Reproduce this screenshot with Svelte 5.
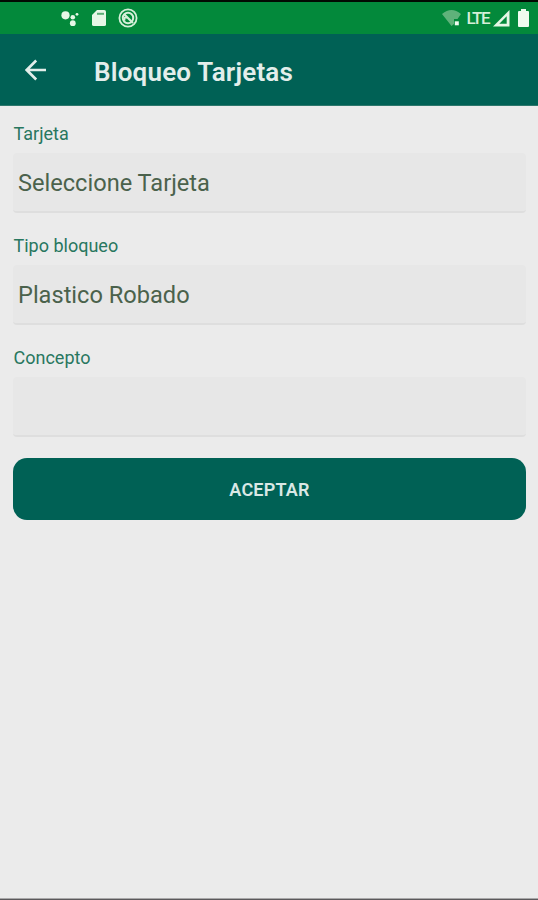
<script lang="ts">
	let tarjeta = $state('Seleccione Tarjeta');
	let tipoBloqueo = $state('Plastico Robado');
	let concepto = $state('');
</script>

<div class="screen">
	<div class="status-bar">
		<div class="notifications">
			<svg width="18" height="18" viewBox="0 0 18 18" fill="#e6f7e6">
				<circle cx="4.5" cy="6.3" r="4.1" />
				<circle cx="11.8" cy="8.3" r="2.3" />
				<circle cx="11.8" cy="14.2" r="2.9" />
				<circle cx="16" cy="5.3" r="1.4" />
			</svg>
			<svg class="sd" width="14" height="18" viewBox="0 0 14 18">
				<path d="M5 1h7.2Q14 1 14 2.6v12.8Q14 17 12.2 17H1.8Q0 17 0 15.4V6z" fill="#e6f7e6" />
				<path d="M5 4.8h7" stroke="#5aad76" stroke-width="2" />
			</svg>
			<svg class="sync" width="20" height="20" viewBox="0 0 20 20" fill="none" stroke="#d5efd8">
				<circle cx="10" cy="10" r="8.6" stroke-width="1.8" />
				<circle cx="10" cy="10" r="5.2" stroke-width="2" />
				<path d="M6 6l9 9" stroke-width="2.2" />
				<path d="M6.5 12.5V9.7h3" stroke-width="1.8" />
			</svg>
		</div>
		<div class="signals">
			<svg width="20" height="18" viewBox="0 0 20 18">
				<path d="M0 5Q9.5-3 19 5L15.5 10H12v5l-2.5 2z" fill="#5fb27a" />
				<path d="M12.8 12.3h4v4h-4z" fill="#f0fbf0" />
			</svg>
			<span class="network">LTE</span>
			<svg class="cell" width="17" height="17" viewBox="0 0 17 17">
				<path d="M16.5 0v16.5H0zM13.7 6.2L6.3 13.8h7.4z" fill="#e6f7e6" fill-rule="evenodd" />
			</svg>
			<svg class="battery" width="11" height="18" viewBox="0 0 11 18">
				<path d="M3 0h5v2h2q1 0 1 1v14q0 1-1 1H1q-1 0-1-1V3q0-1 1-1h2z" fill="#f0fbf0" />
			</svg>
		</div>
	</div>

	<header class="app-bar">
		<button class="back" aria-label="Volver">
			<svg width="22" height="22" viewBox="0 0 22 22" fill="none" stroke="#e3eeeb" stroke-width="2.6">
				<path d="M21 11H2M11.2 1.5L1.7 11l9.5 9.5" />
			</svg>
		</button>
		<h1>Bloqueo Tarjetas</h1>
	</header>

	<form class="form">
		<label for="tarjeta">Tarjeta</label>
		<input id="tarjeta" bind:value={tarjeta} />
		<label for="tipo">Tipo bloqueo</label>
		<input id="tipo" bind:value={tipoBloqueo} />
		<label for="concepto">Concepto</label>
		<input id="concepto" bind:value={concepto} />
		<button type="button" class="accept">ACEPTAR</button>
	</form>
</div>

<style>
	:global(body) {
		background: #ebebeb;
	}

	.screen {
		box-sizing: border-box;
		display: flex;
		flex-direction: column;
		height: 900px;
		font-family: Roboto, sans-serif;
		background: #ebebeb;
		border-top: 2px solid #020a02;
		border-bottom: 1px solid #5b595b;
		box-shadow: inset 0 -1px #a9a8a9;
	}

	.status-bar {
		display: flex;
		justify-content: space-between;
		height: 32px;
		padding: 0 9px 0 61px;
		background: #03893b;
	}

	.notifications,
	.signals {
		display: flex;
		align-items: center;
	}

	.sd {
		margin-left: 13px;
	}

	.sync {
		margin-left: 12px;
	}

	.network {
		margin-left: 4px;
		font-size: 17px;
		font-weight: 500;
		line-height: 20px;
		letter-spacing: -1.5px;
		color: #d5efd8;
	}

	.cell {
		margin-left: 4px;
	}

	.battery {
		margin-left: 8px;
	}

	.app-bar {
		box-sizing: border-box;
		display: flex;
		align-items: center;
		height: 72px;
		padding-left: 25px;
		background: #006155;
		border-bottom: 1px solid #2d776c;
	}

	.back {
		display: flex;
		padding: 0;
		margin-top: 1px;
		background: none;
		border: 0;
	}

	h1 {
		margin: 4px 0 0 47px;
		font-size: 26px;
		font-weight: 600;
		line-height: 32px;
		letter-spacing: 0.2px;
		color: #e3eeeb;
	}

	.form {
		display: flex;
		flex-direction: column;
		padding: 17px 12px 0 13px;
	}

	label {
		height: 30px;
		padding-left: 0.5px;
		font-size: 18px;
		line-height: 22px;
		color: #28775f;
	}

	input {
		box-sizing: border-box;
		width: 100%;
		height: 60px;
		margin: 0 0 22px;
		padding: 1px 5px 0;
		font: 23.6px Roboto, sans-serif;
		color: #4b624c;
		background: #e7e7e7;
		border: 0;
		border-bottom: 2px solid #dedede;
		border-radius: 4px;
		outline: none;
	}

	.accept {
		height: 62px;
		margin-top: -1px;
		padding: 0;
		font: 600 18px Roboto, sans-serif;
		letter-spacing: 0.2px;
		color: #d9e8e5;
		background: #006155;
		border: 0;
		border-radius: 14px;
	}
</style>
